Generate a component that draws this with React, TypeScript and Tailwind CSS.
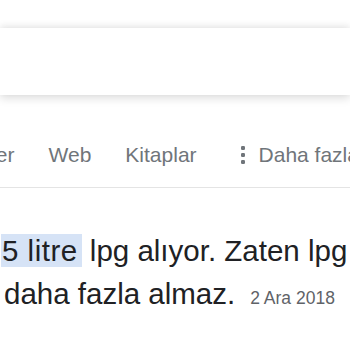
export default function App() {
  const tabs = ['Haberler', 'Web', 'Kitaplar'];

  return (
    <div className="w-[350px] h-[350px] overflow-hidden bg-white font-['Liberation_Sans',Arial,sans-serif]">
      {/* search bar strip */}
      <div className="mt-[28px] h-[67px] w-full bg-white shadow-[0_3px_9px_rgba(0,0,0,0.14),0_-3px_7px_rgba(0,0,0,0.06)]" />

      {/* tabs */}
      <div className="mt-[48px] ml-[-66px] flex items-center whitespace-nowrap text-[21px] leading-[24px] text-[#70757a]">
        {tabs.map((t) => (
          <span key={t} className="mr-[34px]">
            {t}
          </span>
        ))}
        <span className="ml-[9px] flex items-center">
          <svg width="6" height="20" viewBox="0 0 6 20" className="mr-[13px]">
            <rect x="1" y="1" width="4" height="4" rx="1.2" fill="#70757a" />
            <rect x="1" y="8" width="4" height="4" rx="1.2" fill="#70757a" />
            <rect x="1" y="15" width="4" height="4" rx="1.2" fill="#70757a" />
          </svg>
          Daha fazla
        </span>
      </div>

      {/* divider */}
      <div className="mt-[20px] h-px w-full bg-[#e4e4e4]" />

      {/* result snippet */}
      <div className="mt-[41px] whitespace-nowrap text-[29.5px] leading-[43px] text-[#202124]">
        <div className="ml-[1px]">
          <span className="bg-[#d6e3f6] pl-[1px] pr-[4px] tracking-[0.5px]">5 litre</span> lpg alıyor. Zaten lpg
        </div>
        <div className="pl-[4px]">
          daha fazla almaz.
          <span className="ml-[15px] text-[17.5px] text-[#5f6368]">2 Ara 2018</span>
        </div>
      </div>
    </div>
  );
}
